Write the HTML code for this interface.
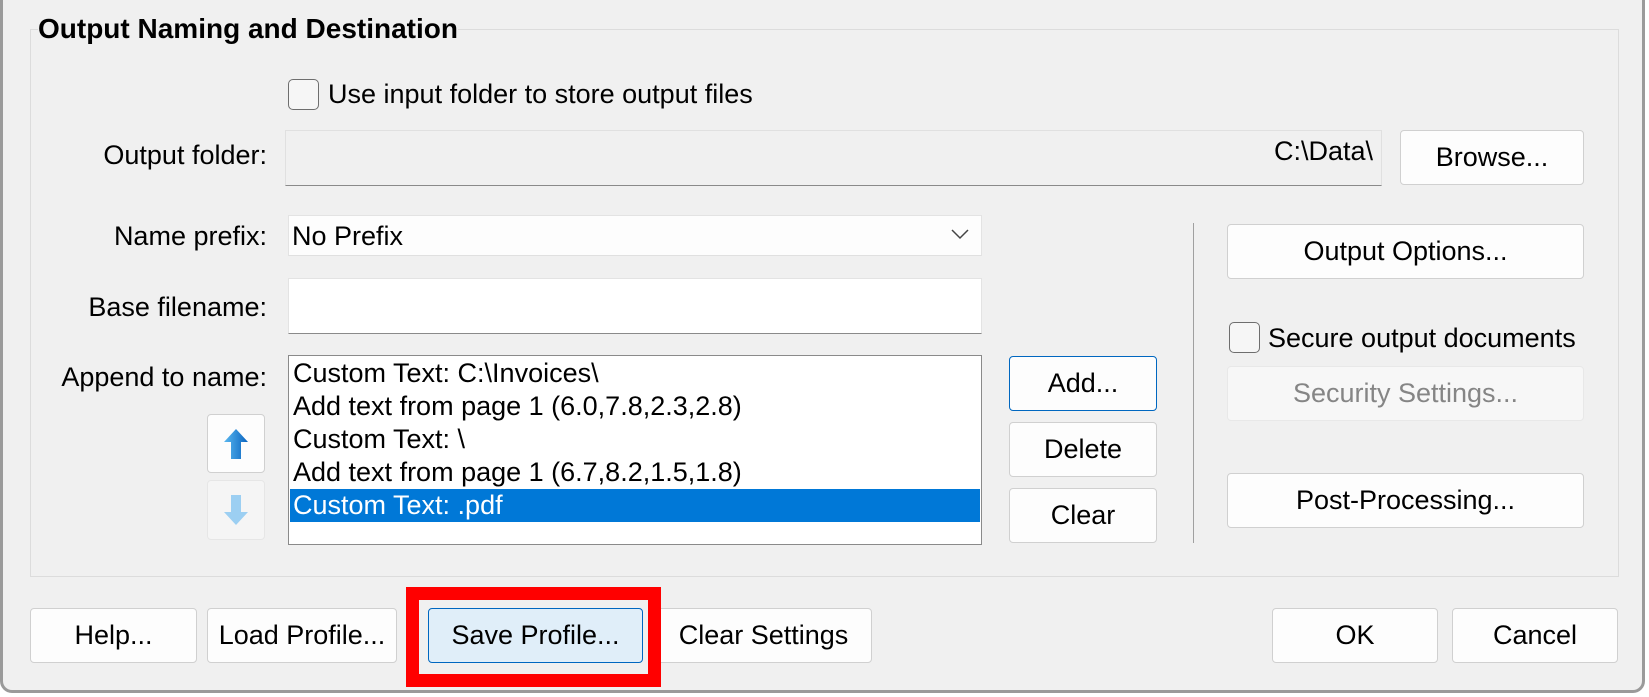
<!DOCTYPE html>
<html><head><meta charset="utf-8"><style>
*{box-sizing:border-box;margin:0;padding:0}
body{width:1649px;height:697px;background:#fff;font-family:"Liberation Sans",sans-serif;font-size:27px;color:#000;position:relative;overflow:hidden}
#win{position:absolute;left:0;top:-20px;width:1645px;height:713px;background:#f0f0f0;border:3px solid #9a9a9a;border-top:none;border-radius:0 0 12px 12px}
.a{position:absolute}
.grp{left:30px;top:29px;width:1589px;height:548px;border:1px solid #dcdcdc}
.title{left:38px;top:13px;font-weight:bold;font-size:28px;background:#f0f0f0}
.lbl{position:absolute;right:1382px;text-align:right;white-space:nowrap}
.btn{position:absolute;background:#fdfdfd;border:1px solid #d0d0d0;border-radius:4px;display:flex;align-items:center;justify-content:center;white-space:nowrap}
.cb{position:absolute;width:31px;height:31px;border:1.5px solid #6e6e6e;border-radius:5px;background:#f6f6f6}
.fld{position:absolute;background:#fff;border:1px solid #e3e3e3;border-bottom:1px solid #8a8a8a}
.row{height:33px;line-height:33px;padding-left:3px;white-space:nowrap}
</style></head><body>
<div id="win"></div>
<div class="a grp"></div>
<div class="a title">Output Naming and Destination</div>

<div class="cb" style="left:288px;top:79px"></div>
<div class="a" style="left:328px;top:79px">Use input folder to store output files</div>

<div class="lbl" style="top:140px">Output folder:</div>
<div class="fld" style="left:285px;top:130px;width:1097px;height:56px;background:#f0f0f0;border-color:#e0e0e0;border-bottom-color:#8a8a8a"></div>
<div class="a" style="right:276px;top:136px">C:\Data\</div>
<div class="btn" style="left:1400px;top:130px;width:184px;height:55px">Browse...</div>

<div class="lbl" style="top:221px">Name prefix:</div>
<div class="fld" style="left:288px;top:215px;width:694px;height:41px;border-bottom-color:#e0e0e0;background:#fdfdfd"></div>
<div class="a" style="left:292px;top:221px">No Prefix</div>
<svg class="a" style="left:951px;top:229px" width="18" height="11"><path d="M1 1 L9 9 L17 1" fill="none" stroke="#444" stroke-width="1.5"/></svg>

<div class="lbl" style="top:292px">Base filename:</div>
<div class="fld" style="left:288px;top:278px;width:694px;height:56px"></div>

<div class="lbl" style="top:362px">Append to name:</div>
<div class="a" style="left:288px;top:355px;width:694px;height:190px;background:#fff;border:1px solid #8a8a8a;padding:1px">
<div class="row">Custom Text: C:\Invoices\</div>
<div class="row">Add text from page 1 (6.0,7.8,2.3,2.8)</div>
<div class="row">Custom Text: \</div>
<div class="row">Add text from page 1 (6.7,8.2,1.5,1.8)</div>
<div class="row" style="background:#0078d7;color:#fff">Custom Text: .pdf</div>
</div>

<div class="btn" style="left:207px;top:414px;width:58px;height:59px"><svg width="26" height="32"><defs><linearGradient id="g" x1="0" x2="1"><stop offset="0" stop-color="#5ab8f0"/><stop offset="1" stop-color="#0a64c0"/></linearGradient></defs><path d="M13 1 L25 14 L18 14 L18 31 L8 31 L8 14 L1 14 Z" fill="url(#g)"/></svg></div>
<div class="btn" style="left:207px;top:480px;width:58px;height:60px;background:#f5f5f5;border-color:#e6e6e6"><svg width="26" height="32"><path d="M13 31 L25 18 L18 18 L18 1 L8 1 L8 18 L1 18 Z" fill="#9ccff2"/></svg></div>

<div class="btn" style="left:1009px;top:356px;width:148px;height:55px;border-color:#0067c0">Add...</div>
<div class="btn" style="left:1009px;top:422px;width:148px;height:55px">Delete</div>
<div class="btn" style="left:1009px;top:488px;width:148px;height:55px">Clear</div>

<div class="a" style="left:1193px;top:223px;width:1px;height:320px;background:#a0a0a0"></div>

<div class="btn" style="left:1227px;top:224px;width:357px;height:55px">Output Options...</div>
<div class="cb" style="left:1229px;top:322px"></div>
<div class="a" style="left:1268px;top:323px">Secure output documents</div>
<div class="btn" style="left:1227px;top:366px;width:357px;height:55px;background:#f7f7f7;border-color:#e8e8e8;color:#858585">Security Settings...</div>
<div class="btn" style="left:1227px;top:473px;width:357px;height:55px">Post-Processing...</div>

<div class="btn" style="left:30px;top:608px;width:167px;height:55px">Help...</div>
<div class="btn" style="left:207px;top:608px;width:190px;height:55px">Load Profile...</div>
<div class="btn" style="left:655px;top:608px;width:217px;height:55px">Clear Settings</div>
<div class="a" style="left:406px;top:587px;width:255px;height:100px;border:13px solid #ff0000;background:#f0f0f0"></div>
<div class="btn" style="left:428px;top:608px;width:215px;height:55px;background:#e0eef9;border-color:#0067c0">Save Profile...</div>
<div class="btn" style="left:1272px;top:608px;width:166px;height:55px">OK</div>
<div class="btn" style="left:1452px;top:608px;width:166px;height:55px">Cancel</div>
</body></html>
